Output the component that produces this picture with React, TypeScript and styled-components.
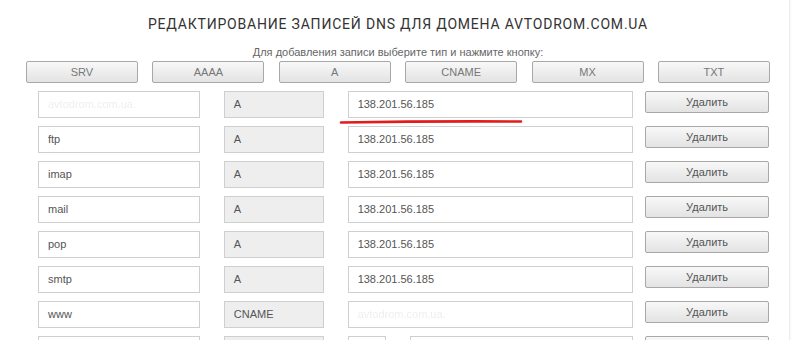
import React from "react";
import styled, { createGlobalStyle } from "styled-components";

const Global = createGlobalStyle`
  html, body { margin: 0; padding: 0; background: #fff; }
  body { font-family: "Liberation Sans", Arial, sans-serif; }
`;

const Page = styled.div`
  width: 790px;
  min-height: 340px;
  box-sizing: border-box;
  border-right: 1px solid #ececec;
  box-shadow: 1px 0 2px rgba(0, 0, 0, 0.03);
  padding: 14px 20px 0 26px;
`;

const Title = styled.h1`
  margin: 0;
  width: 744px;
  text-align: center;
  font-family: Roboto, "Liberation Sans", sans-serif;
  font-weight: 400;
  font-size: 14px;
  line-height: 20px;
  letter-spacing: 0.8px;
  color: #333;
`;

const Hint = styled.div`
  width: 744px;
  margin-top: 11px;
  text-align: center;
  font-size: 11px;
  line-height: 14px;
  color: #666;
`;

const TypeBar = styled.div`
  width: 744px;
  margin-top: 2px;
  display: flex;
  justify-content: space-between;
`;

const Btn = styled.button<{ $w: number; $dark?: boolean }>`
  width: ${(p) => p.$w}px;
  height: 22px;
  box-sizing: border-box;
  padding: 0;
  border: 1px solid #a8a8a8;
  border-radius: 2px;
  background: linear-gradient(#f8f8f8, #e3e3e3);
  font-family: "Liberation Sans", Arial, sans-serif;
  font-size: 11px;
  line-height: 20px;
  color: ${(p) => (p.$dark ? "#555" : "#777")};
  text-align: center;
  cursor: pointer;
`;

const Rows = styled.div`
  margin-top: 8px;
  display: flex;
  flex-direction: column;
  gap: 8px;
`;

const Row = styled.div`
  position: relative;
  display: flex;
  align-items: flex-start;
  padding-left: 12px;
`;

const Field = styled.div<{ $w: number; $gap: number; $grey?: boolean }>`
  width: ${(p) => p.$w}px;
  height: 27px;
  margin-right: ${(p) => p.$gap}px;
  box-sizing: border-box;
  border: 1px solid #cfcfcf;
  background: ${(p) => (p.$grey ? "#eeeeee" : "#fff")};
  padding-left: 9px;
  font-size: 11px;
  line-height: 25px;
  color: #555;
  white-space: nowrap;
  overflow: hidden;
`;

const Faint = styled.span`
  color: #efefef;
  filter: blur(0.7px);
  display: inline-block;
`;

const Annotation = styled.svg`
  position: absolute;
  left: 314px;
  top: 28px;
  width: 182px;
  height: 6px;
  overflow: visible;
`;

type Rec = { name: string; type: string; value: string; faintName?: boolean; faintValue?: boolean; mx?: boolean };

const records: Rec[] = [
  { name: "avtodrom.com.ua.", type: "A", value: "138.201.56.185", faintName: true },
  { name: "ftp", type: "A", value: "138.201.56.185" },
  { name: "imap", type: "A", value: "138.201.56.185" },
  { name: "mail", type: "A", value: "138.201.56.185" },
  { name: "pop", type: "A", value: "138.201.56.185" },
  { name: "smtp", type: "A", value: "138.201.56.185" },
  { name: "www", type: "CNAME", value: "avtodrom.com.ua.", faintValue: true },
  { name: "", type: "", value: "", mx: true },
];

const types = ["SRV", "AAAA", "A", "CNAME", "MX", "TXT"];

export default function App() {
  return (
    <>
      <Global />
      <Page>
        <Title>РЕДАКТИРОВАНИЕ ЗАПИСЕЙ DNS ДЛЯ ДОМЕНА AVTODROM.COM.UA</Title>
        <Hint>Для добавления записи выберите тип и нажмите кнопку:</Hint>
        <TypeBar>
          {types.map((t) => (
            <Btn key={t} $w={112}>{t}</Btn>
          ))}
        </TypeBar>
        <Rows>
          {records.map((r, i) => (
            <Row key={i}>
              <Field $w={162} $gap={24}>
                {r.faintName ? <Faint>{r.name}</Faint> : r.name}
              </Field>
              <Field $w={100} $gap={24} $grey>
                {r.type}
              </Field>
              {r.mx ? (
                <>
                  <Field $w={38} $gap={24} />
                  <Field $w={224} $gap={12} />
                </>
              ) : (
                <Field $w={286} $gap={12}>
                  {r.faintValue ? <Faint>{r.value}</Faint> : r.value}
                </Field>
              )}
              <Btn $w={124} $dark>Удалить</Btn>
              {i === 0 && (
                <Annotation viewBox="0 0 182 6" preserveAspectRatio="none">
                  <path d="M1 3.5 Q 90 2 181 2.5" stroke="#e31b1b" strokeWidth="2.6" fill="none" strokeLinecap="round" />
                </Annotation>
              )}
            </Row>
          ))}
        </Rows>
      </Page>
    </>
  );
}
